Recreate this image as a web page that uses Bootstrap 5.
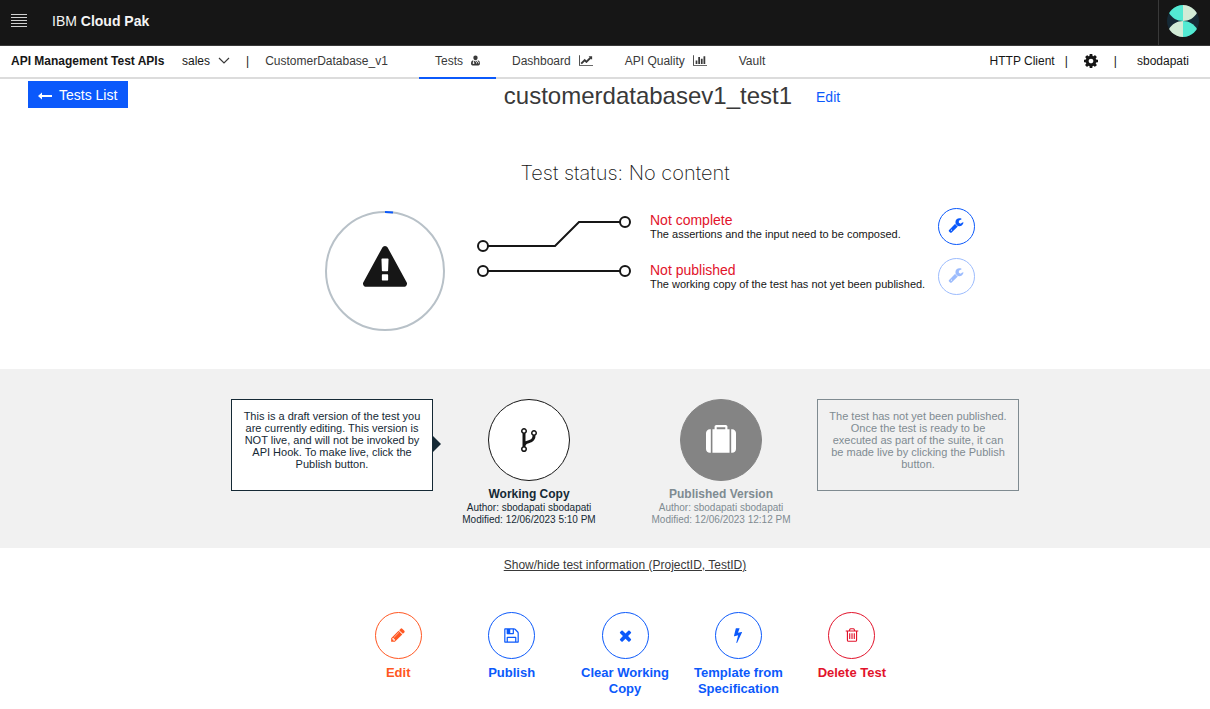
<!DOCTYPE html>
<html lang="en">
<head>
<meta charset="utf-8">
<meta name="viewport" content="width=device-width, initial-scale=1">
<title>customerdatabasev1_test1</title>
<link href="https://cdn.jsdelivr.net/npm/bootstrap@5.3.0/dist/css/bootstrap.min.css" rel="stylesheet">
<style>
  :root { --ink: #161616; --blue: #0b59fb; --red: #e2132b; --orange: #ff5722; --navy: #152935; }
  body { font-family: "Liberation Sans", Arial, sans-serif; font-size: 12px; line-height: 16px; color: var(--ink); }
  svg { display: block; fill: currentColor; }
  .topbar { height: 46px; background: #161616; border-bottom: 1px solid #393939; color: #f4f4f4; font-size: 14px; }
  .menu-btn { width: 52px; padding: 0 0 4px 11px; border: 0; background: none; color: #d0d0d0; }
  .account { width: 52px; border: 0; border-left: 1px solid #393939; border-radius: 0; padding: 0 3px 3px 0; }
  .subnav { height: 33px; border-bottom: 2px solid #dcdcdc; }
  .subnav a { color: #393939; text-decoration: none; }
  .subnav a.dark { color: var(--ink); }
  .context { width: 419px; padding-left: 11px; }
  .project { width: 171px; }
  .nav-text { padding-bottom: 2px; }
  .tab { height: 33px; padding: 0 16px 2px; border-bottom: 2px solid transparent; gap: 8px; }
  .tab.active { border-color: var(--blue); width: 77px; }
  .right-links { padding-right: 21px; }
  .right-links .bar-a { padding: 0 16px 0 10px; }
  .right-links .bar-b { padding: 0 20px 0 16px; }
  .indent { padding-left: 40px; }
  .title-row { padding: 2px 0 0 28px; }
  .btn-back { background: var(--blue); color: #fff; font-size: 14px; line-height: 17px; padding: 6px 10px 4px; border-radius: 0; width: 100px; gap: 7px; }
  .title-group { padding: 1px 0 0 6px; }
  .test-title { font-size: 24px; line-height: 28px; color: #393939; }
  .edit-link { font-size: 14px; color: var(--blue); text-decoration: none; padding-top: 2px; }
  .status-title { font-family: Inter, "Liberation Sans", sans-serif; font-weight: 200; font-size: 20px; line-height: 28px; margin-top: 49px; }
  .status-row { max-width: 700px; padding-left: 50px; margin-top: 21px; }
  .status-ring { margin-top: 3px; }
  .messages { width: 288px; margin-left: 19px; }
  .message { height: 50px; padding-top: 4px; font-size: 11px; line-height: 12px; }
  .message strong { display: block; font-weight: 400; font-size: 14px; line-height: 16px; color: var(--red); }
  .round { border: 1px solid currentColor; border-radius: 50%; display: flex; align-items: center; justify-content: center; padding: 0; background: #fff; }
  .round-sm { width: 37px; height: 37px; margin-bottom: 13px; padding: 0 1px 3px 0; color: var(--blue); }
  .round-sm:disabled { color: var(--blue); opacity: .4; }
  .round-md { width: 47px; height: 47px; padding-bottom: 1px; }
  .round-lg { width: 82px; height: 82px; color: var(--ink); }
  .versions { background: #f1f1f1; margin-top: 38px; padding-top: 30px; height: 179px; color: var(--navy); }
  .note { width: 202px; height: 92px; border: 1px solid var(--navy); background: #fff; padding: 10px; font-size: 11px; line-height: 12px; text-align: center; position: relative; }
  .note-arrow { position: absolute; left: 100%; top: 35px; }
  .version { width: 192px; font-size: 10px; line-height: 12px; text-align: center; }
  .version h2 { font-size: 12px; line-height: 16px; font-weight: 700; margin: 5px 0 0; }
  .unpublished { color: #7f8b91; }
  .unpublished.note { background: transparent; border-color: currentColor; }
  .unpublished .round { background: #848484; border-color: #848484; color: #fff; }
  .info-row { padding-top: 9px; }
  .info-link { font-size: 12px; color: #393939; }
  .action-row { max-width: 567px; margin-top: 39px; }
  .action { flex: 1 1 0; background: none; border: 0; padding: 0; font-size: 13px; line-height: 16px; font-weight: 700; color: var(--blue); gap: 6px; }
  .action.edit { color: var(--orange); }
  .action.delete { color: var(--red); }
</style>
</head>
<body>
<header class="topbar d-flex align-items-stretch">
  <button class="menu-btn d-flex align-items-center" aria-label="Menu">
    <svg width="16" height="13" viewBox="0 0 16 13"><path d="M0 0h16v1H0zm0 3h16v1H0zm0 3h16v1H0zm0 3h16v1H0zm0 3h16v1H0z"/></svg>
  </button>
  <div class="d-flex align-items-center pb-1"><span>IBM <b>Cloud Pak</b></span></div>
  <button class="btn account ms-auto d-flex align-items-center justify-content-center" aria-label="Account">
    <svg width="32" height="32" viewBox="0 0 32 32"><clipPath id="disc"><circle cx="16" cy="16" r="16"/></clipPath><g clip-path="url(#disc)"><path fill="#152935" d="M0 0h32v32H0z"/><path fill="#53ead3" d="M16 0v16C10 16 5 13 2 8V0z"/><path fill="#d2ebd6" d="M16 0v16c6 0 11-3 14-8V0zM16 32V16C10 16 5 19 2 24v8z"/><path fill="#53ead3" d="M16 32V16c6 0 11 3 14 8v8z"/></g></svg>
  </button>
</header>

<nav class="subnav d-flex">
  <div class="context nav-text d-flex align-items-center">
    <b class="project text-nowrap">API Management Test APIs</b>
    <a href="#" class="dark d-flex align-items-center gap-2">sales
      <svg width="12" height="8" viewBox="0 0 12 8"><path d="M1 1l5 5 5-5" fill="none" stroke="#393939" stroke-width="1.2"/></svg></a>
    <span class="px-3">|</span>
    <a href="#">CustomerDatabase_v1</a>
  </div>
  <a href="#" class="tab active d-flex align-items-center">Tests
    <svg width="10" height="11" viewBox="0 0 11 12"><path d="M5.500 0C3.800 0 2.900 1 2.900 2.700S4 5.800 5.500 5.800 8.100 4.400 8.100 2.700 7.200 0 5.500 0zM2.600 5.600C.8 5.900 0 7.500 0 9.800 0 11.200.7 12 2 12h7c1.300 0 2-.8 2-2.200 0-2.300-.8-3.900-2.600-4.200v1.500c1 .2 1.500.8 1.500 1.700v1H9v-1c0-1.200-1.900-1.200-1.900 0v1h-.9v-1c0-.9.500-1.500 1.300-1.700V6L5.500 7.500 3.500 6v2c1.300.5.900 2.200-.3 2.200S1.400 8.500 2.600 8z"/></svg></a>
  <a href="#" class="tab d-flex align-items-center">Dashboard
    <svg width="14" height="11" viewBox="0 128 2048 1536"><path d="M2048 1536v128h-2048v-1536h128v1408h1920zm-128-1248v435q0 21-19.500 29.500t-35.500-7.500l-121-121-633 633q-10 10-23 10t-23-10l-233-233-416 416-192-192 585-585q10-10 23-10t23 10l233 233 464-464-121-121q-16-16-7.500-35.500t29.500-19.500h435q14 0 23 9t9 23z"/></svg></a>
  <a href="#" class="tab d-flex align-items-center">API Quality
    <svg width="14" height="11" viewBox="0 128 2048 1536"><path d="M640 896v512h-256v-512h256zm384-512v1024h-256v-1024h256zm1024 1152v128h-2048v-1536h128v1408h1920zm-640-896v768h-256v-768h256zm384-384v1152h-256v-1152h256z"/></svg></a>
  <a href="#" class="tab d-flex align-items-center">Vault</a>
  <div class="right-links nav-text ms-auto d-flex align-items-center">
    <a href="#" class="dark">HTTP Client</a><span class="bar-a">|</span>
    <a href="#" class="dark" aria-label="Settings"><svg width="14" height="14" viewBox="128 128 1536 1536"><path d="M1152 896q0-106-75-181t-181-75-181 75-75 181 75 181 181 75 181-75 75-181zm512-109v222q0 12-8 23t-20 13l-185 28q-19 54-39 91 35 50 107 138 10 12 10 25t-9 23q-27 37-99 108t-94 71q-12 0-26-9l-138-108q-44 23-91 38-16 136-29 186-7 28-36 28h-222q-14 0-24.500-8.500t-11.500-21.500l-28-184q-49-16-90-37l-141 107q-10 9-25 9-14 0-25-11-126-114-165-168-7-10-7-23 0-12 8-23 15-21 51-66.500t54-70.500q-27-50-41-99l-183-27q-13-2-21-12.500t-8-23.500v-222q0-12 8-23t19-13l186-28q14-46 39-92-40-57-107-138-10-12-10-24 0-10 9-23 26-36 98.500-107.500t94.500-71.500q13 0 26 10l138 107q44-23 91-38 16-136 29-186 7-28 36-28h222q14 0 24.500 8.500t11.500 21.500l28 184q49 16 90 37l142-107q9-9 24-9 13 0 25 10 129 119 165 170 7 8 7 22 0 12-8 23-15 21-51 66.500t-54 70.500q26 50 41 98l183 28q13 2 21 12.500t8 23.500z"/></svg></a>
    <span class="bar-b">|</span><a href="#" class="dark">sbodapati</a>
  </div>
</nav>

<main>
  <div class="title-row d-flex align-items-start">
    <button class="btn btn-back border-0 d-flex align-items-center text-nowrap">
      <svg width="14" height="8" viewBox="0 0 14 8"><path d="M0 4l4-3.500V3h10v2H4v2.500z"/></svg>Tests List</button>
    <div class="title-group flex-grow-1 d-flex justify-content-center align-items-center">
      <h1 class="test-title mb-0">customerdatabasev1_test1</h1>
      <a href="#" class="edit-link ms-4">Edit</a>
    </div>
  </div>

  <section class="indent">
    <h2 class="status-title text-center mb-0">Test status: No content</h2>
    <div class="status-row d-flex mx-auto">
      <svg class="status-ring flex-shrink-0" width="120" height="120" viewBox="0 0 120 120">
        <circle cx="60" cy="60" r="59" fill="none" stroke="#b8c1c8" stroke-width="2"/>
        <path d="M60 1q4 0 8 .6" fill="none" stroke="#0b59fb" stroke-width="2"/>
        <svg x="38" y="35" width="44" height="44" viewBox="0 0 1792 1792"><path d="M1024 1375v-190q0-14-9.500-23.500t-22.500-9.500h-192q-13 0-22.500 9.500t-9.500 23.500v190q0 14 9.500 23.500t22.500 9.500h192q13 0 22.500-9.500t9.500-23.500zm-2-374l18-459q0-12-10-19-13-11-24-11h-220q-11 0-24 11-10 7-10 21l17 457q0 10 10 16.500t24 6.500h185q14 0 23.500-6.500t10.500-16.500zm-14-934l768 1408q35 63-2 126-17 29-46.500 46t-63.500 17h-1536q-34 0-63.500-17t-46.500-46q-37-63-2-126l768-1408q17-31 47-49t65-18 65 18 47 49z"/></svg>
      </svg>
      <svg class="flex-shrink-0 ms-auto" width="154" height="80" viewBox="0 0 154 80">
        <g fill="none" stroke="#161616" stroke-width="2"><path d="M11 38H78L102 14H143M11 63H143"/><circle cx="6" cy="38" r="5"/><circle cx="148" cy="14" r="5"/><circle cx="6" cy="63" r="5"/><circle cx="148" cy="63" r="5"/></g>
      </svg>
      <div class="messages">
        <div class="message"><strong>Not complete</strong>The assertions and the input need to be composed.</div>
        <div class="message"><strong>Not published</strong>The working copy of the test has not yet been published.</div>
      </div>
      <div>
        <button class="round round-sm" aria-label="Compose test"><svg width="16" height="16" viewBox="0 0 1792 1792"><path id="wrench" d="M448 1472q0-26-19-45t-45-19-45 19-19 45 19 45 45 19 45-19 19-45zm644-420l-682 682q-37 37-90 37-52 0-91-37l-106-108q-38-36-38-90 0-53 38-91l681-681q39 98 114.500 173.500t173.500 114.500zm634-435q0 39-23 106-47 134-164.500 217.500t-258.500 83.500q-185 0-316.500-131.500t-131.500-316.500 131.500-316.500 316.500-131.500q58 0 121.500 16.500t107.500 46.500q16 11 16 28t-16 28l-293 169v224l193 107q5-3 79-48.500t135.500-81 70.500-35.500q15 0 23.500 10t8.500 25z"/></svg></button>
        <button class="round round-sm" disabled aria-label="Publish test"><svg width="16" height="16" viewBox="0 0 1792 1792"><use href="#wrench"/></svg></button>
      </div>
    </div>
  </section>

  <section class="versions indent d-flex justify-content-center">
    <div class="note">This is a draft version of the test you are currently editing. This version is NOT live, and will not be invoked by API Hook. To make live, click the Publish button.
      <svg class="note-arrow" width="9" height="18" viewBox="0 0 9 18"><path d="M0 0l9 9-9 9z"/></svg></div>
    <div class="version">
      <div class="round round-lg mx-auto"><svg width="28" height="28" viewBox="0 0 1792 1792"><path d="M672 1472q0-40-28-68t-68-28-68 28-28 68 28 68 68 28 68-28 28-68zm0-1152q0-40-28-68t-68-28-68 28-28 68 28 68 68 28 68-28 28-68zm640 128q0-40-28-68t-68-28-68 28-28 68 28 68 68 28 68-28 28-68zm96 0q0 52-26 96.500t-70 69.500q-2 287-226 414-67 38-203 81-128 40-169.500 71t-41.500 100v26q44 25 70 69.500t26 96.500q0 80-56 136t-136 56-136-56-56-136q0-52 26-96.500t70-69.500v-820q-44-25-70-69.500t-26-96.500q0-80 56-136t136-56 136 56 56 136q0 52-26 96.500t-70 69.500v497q54-26 154-57 55-17 87.500-29.500t70.500-31 59-39.500 40.500-51 28-69.500 8.500-91.500q-44-25-70-69.500t-26-96.500q0-80 56-136t136-56 136 56 56 136z"/></svg></div>
      <h2>Working Copy</h2>
      <div>Author: sbodapati sbodapati</div><div>Modified: 12/06/2023 5:10 PM</div>
    </div>
    <div class="version unpublished">
      <div class="round round-lg mx-auto"><svg width="30" height="30" viewBox="0 0 1792 1792"><path d="M640 256h512v-128h-512v128zm-352 0v1408h-64q-92 0-158-66t-66-158v-960q0-92 66-158t158-66h64zm1120 0v1408h-1024v-1408h128v-160q0-40 28-68t68-28h576q40 0 68 28t28 68v160h128zm384 224v960q0 92-66 158t-158 66h-64v-1408h64q92 0 158 66t66 158z"/></svg></div>
      <h2>Published Version</h2>
      <div>Author: sbodapati sbodapati</div><div>Modified: 12/06/2023 12:12 PM</div>
    </div>
    <div class="note unpublished">The test has not yet been published. Once the test is ready to be executed as part of the suite, it can be made live by clicking the Publish button.</div>
  </section>

  <section class="info-row indent text-center">
    <a href="#" class="info-link">Show/hide test information (ProjectID, TestID)</a>
    <div class="action-row d-flex mx-auto">
      <button class="action edit d-flex flex-column align-items-center"><span class="round round-md"><svg width="16" height="16" viewBox="0 0 1792 1792"><path d="M491 1536l91-91-235-235-91 91v107h128v128h107zm523-928q0-22-22-22-10 0-17 7l-542 542q-7 7-7 17 0 22 22 22 10 0 17-7l542-542q7-7 7-17zm-54-192l416 416-832 832h-416v-416zm683 96q0 53-37 90l-166 166-416-416 166-165q36-38 90-38 53 0 91 38l235 234q37 39 37 91z"/></svg></span>Edit</button>
      <button class="action d-flex flex-column align-items-center"><span class="round round-md"><svg width="17" height="17" viewBox="0 0 1792 1792"><path d="M512 1536h768v-384h-768v384zm896 0h128v-896q0-14-10-38.500t-20-34.500l-281-281q-10-10-34-20t-39-10v416q0 40-28 68t-68 28h-576q-40 0-68-28t-28-68v-416h-128v1280h128v-416q0-40 28-68t68-28h832q40 0 68 28t28 68v416zm-384-928v-320q0-13-9.500-22.500t-22.500-9.500h-192q-13 0-22.500 9.500t-9.500 22.500v320q0 13 9.500 22.500t22.500 9.500h192q13 0 22.500-9.500t9.500-22.500zm640 32v928q0 40-28 68t-68 28h-1344q-40 0-68-28t-28-68v-1344q0-40 28-68t68-28h928q40 0 88 20t76 48l280 280q28 28 48 76t20 88z"/></svg></span>Publish</button>
      <button class="action d-flex flex-column align-items-center"><span class="round round-md"><svg width="17" height="17" viewBox="0 0 1792 1792"><path d="M1490 1322q0 40-28 68l-136 136q-28 28-68 28t-68-28l-294-294-294 294q-28 28-68 28t-68-28l-136-136q-28-28-28-68t28-68l294-294-294-294q-28-28-28-68t28-68l136-136q28-28 68-28t68 28l294 294 294-294q28-28 68-28t68 28l136 136q28 28 28 68t-28 68l-294 294 294 294q28 28 28 68z"/></svg></span>Clear Working Copy</button>
      <button class="action d-flex flex-column align-items-center"><span class="round round-md"><svg width="16" height="16" viewBox="0 0 1792 1792"><path d="M1333 566q18 20 7 44l-540 1157q-13 25-42 25-4 0-14-2-17-5-25.500-19t-4.500-30l197-808-406 101q-4 1-12 1-18 0-31-11-18-15-13-39l201-825q4-14 16-23t28-9h328q19 0 32 12.500t13 29.500q0 8-5 18l-171 463 396-98q8-2 12-2 19 0 34 15z"/></svg></span>Template from Specification</button>
      <button class="action delete d-flex flex-column align-items-center"><span class="round round-md"><svg width="16" height="16" viewBox="0 0 1792 1792"><path d="M704 736v576q0 14-9 23t-23 9h-64q-14 0-23-9t-9-23v-576q0-14 9-23t23-9h64q14 0 23 9t9 23zm256 0v576q0 14-9 23t-23 9h-64q-14 0-23-9t-9-23v-576q0-14 9-23t23-9h64q14 0 23 9t9 23zm256 0v576q0 14-9 23t-23 9h-64q-14 0-23-9t-9-23v-576q0-14 9-23t23-9h64q14 0 23 9t9 23zm128 724v-948h-896v948q0 22 7 40.500t14.500 27 10.500 8.500h832q3 0 10.500-8.500t14.500-27 7-40.500zm-672-1076h448l-48-117q-7-9-17-11h-317q-10 2-17 11zm928 32v64q0 14-9 23t-23 9h-96v948q0 83-47 143.500t-113 60.500h-832q-66 0-113-58.500t-47-141.500v-952h-96q-14 0-23-9t-9-23v-64q0-14 9-23t23-9h309l70-167q15-37 54-63t79-26h320q40 0 79 26t54 63l70 167h309q14 0 23 9t9 23z"/></svg></span>Delete Test</button>
    </div>
  </section>
</main>
<script src="https://cdn.jsdelivr.net/npm/bootstrap@5.3.0/dist/js/bootstrap.bundle.min.js"></script>
</body>
</html>
